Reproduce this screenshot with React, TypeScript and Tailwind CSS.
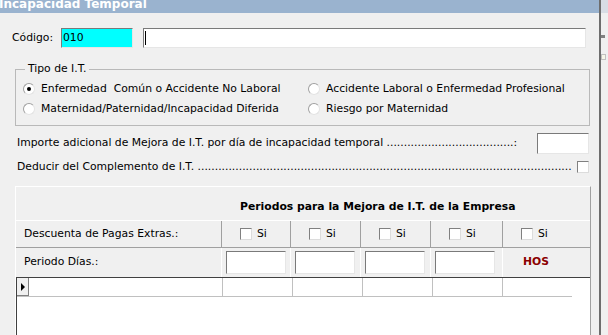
import React from "react";

const font = { fontFamily: '"DejaVu Sans", Verdana, sans-serif' };

function Radio({ checked }: { checked?: boolean }) {
  return (
    <span className="relative inline-block w-[12px] h-[12px] rounded-full bg-white border border-t-[#a0a0a0] border-l-[#a0a0a0] border-b-[#e3e3e3] border-r-[#e3e3e3] shrink-0">
      {checked && (
        <span className="absolute left-[3px] top-[3px] w-[4px] h-[4px] rounded-full bg-black" />
      )}
    </span>
  );
}

function Check() {
  return (
    <span className="inline-block w-[12px] h-[12px] bg-white border border-t-[#808080] border-l-[#808080] border-b-[#dcdcdc] border-r-[#dcdcdc] shrink-0" />
  );
}

function Sunken({ className }: { className: string }) {
  return (
    <div
      className={
        "bg-white border border-t-[#7a7a7a] border-l-[#7a7a7a] border-b-[#e6e6e6] border-r-[#e6e6e6] " +
        className
      }
    />
  );
}

export default function App() {
  return (
    <div
      className="w-[608px] h-[335px] overflow-hidden flex bg-[#f0f0f0] text-[10.8px] text-black"
      style={font}
    >
      <div className="w-[599px] h-full flex flex-col shrink-0">
        <div className="h-[13px] bg-[#9ab3cf] text-white font-bold text-[12px] leading-[13px] overflow-hidden">
          <div className="-mt-[2px] -ml-[1px]">Incapacidad Temporal</div>
        </div>
        {/* Codigo row */}
        <div className="flex items-center mt-[15px] h-[20px]">
          <span className="ml-[12px] w-[49px]">Código:</span>
          <div className="w-[72px] h-[20px] bg-[#00ffff] border border-t-[#7a7a7a] border-l-[#7a7a7a] border-b-[#e6e6e6] border-r-[#e6e6e6] leading-[17px] pl-[1px]">
            010
          </div>
          <div className="ml-[10px] w-[443px] h-[20px] bg-white border border-t-[#7a7a7a] border-l-[#7a7a7a] border-b-[#e6e6e6] border-r-[#e6e6e6] flex items-center pl-[1px]">
            <span className="w-[1px] h-[14px] bg-black" />
          </div>
        </div>
        {/* Group box */}
        <div className="relative ml-[15px] mt-[21px] w-[575px] h-[57px] border border-[#b9b9b9]">
          <span className="absolute left-[9px] -top-[8px] px-[3px] bg-[#f0f0f0] leading-[14px]">
            Tipo de I.T.
          </span>
          <div className="grid grid-cols-[285px_1fr] pl-[7px] pt-[12px] gap-y-[6px]">
            <div className="flex items-center gap-[6px] h-[14px]">
              <Radio checked />
              <span>Enfermedad&nbsp; Común o Accidente No Laboral</span>
            </div>
            <div className="flex items-center gap-[6px] h-[14px]">
              <Radio />
              <span>Accidente Laboral o Enfermedad Profesional</span>
            </div>
            <div className="flex items-center gap-[6px] h-[14px]">
              <Radio />
              <span>Maternidad/Paternidad/Incapacidad Diferida</span>
            </div>
            <div className="flex items-center gap-[6px] h-[14px]">
              <Radio />
              <span>Riesgo por Maternidad</span>
            </div>
          </div>
        </div>
        {/* Importe */}
        <div className="flex items-center mt-[7px] h-[21px]">
          <span className="ml-[17px] w-[518px] shrink-0 whitespace-nowrap">
            Importe adicional de Mejora de I.T. por día de incapacidad temporal .....................................:
          </span>
          <Sunken className="ml-[2px] w-[52px] h-[21px] shrink-0" />
        </div>
        <div className="flex items-center mt-[4px] h-[18px]">
          <span className="ml-[17px] w-[556px] shrink-0 whitespace-nowrap">
            Deducir del Complemento de I.T. .............................................................................................................
          </span>
          <span className="ml-[4px] flex">
            <Check />
          </span>
        </div>
        {/* Table */}
        <div className="ml-[15px] mt-[10px] w-[576px] flex-1 flex flex-col border-l border-t border-l-white border-t-white border-r border-r-[#a0a0a0]">
          <div className="h-[34px] flex items-center border-b border-white pt-[7px]">
            <span className="ml-[224px] font-bold">
              Periodos para la Mejora de I.T. de la Empresa
            </span>
          </div>
          <div className="grid grid-cols-[205px_69px_70px_70px_72px_69px] h-[27px] border-b border-[#a0a0a0]">
            <div className="flex items-center pl-[8px]">Descuenta de Pagas Extras.:</div>
            {[0, 1, 2, 3, 4].map((i) => (
              <div
                key={i}
                className="flex items-center pl-[18px] gap-[5px] border-l border-[#a0a0a0]"
              >
                <Check />
                <span>Si</span>
              </div>
            ))}
          </div>
          <div className="grid grid-cols-[205px_69px_70px_70px_72px_69px] h-[29px]">
            <div className="flex items-center pl-[8px]">Periodo Días.:</div>
            {[0, 1, 2, 3].map((i) => (
              <div key={i} className="flex items-center pl-[4px] border-l border-[#ffffff]">
                <Sunken className="w-[60px] h-[23px]" />
              </div>
            ))}
            <div className="flex items-center pl-[20px] font-bold text-[#8b0000] border-l border-white">
              HOS
            </div>
          </div>
          <div className="flex-1 bg-white border-t border-l border-t-[#404040] border-l-[#404040]">
            <div className="grid grid-cols-[205px_70px_70px_70px_70px_70px] h-[19px]">
              <div className="border-b border-[#c0c0c0] flex">
                <div className="w-[12px] h-[18px] bg-[#f0f0f0] border-r border-b border-[#808080] flex items-center justify-center">
                  <svg width="6" height="10" viewBox="0 0 6 10">
                    <path d="M1 1 L5 5 L1 9 Z" fill="black" />
                  </svg>
                </div>
              </div>
              {[0, 1, 2, 3, 4].map((i) => (
                <div key={i} className="border-l border-b border-[#c0c0c0]" />
              ))}
            </div>
          </div>
        </div>
      </div>
      <div className="w-[2px] h-full bg-[#6d6d6d]" />
      <div className="flex-1 h-full bg-[#f0f0f0] flex flex-col">
        <div className="h-[13px] bg-[#d8dde5]" />
        <div className="mt-[22px] h-[3px] bg-[#808080] w-[4px]" />
        <div className="mt-[16px] h-[6px] border border-[#c0c0c0] bg-[#f6f6e8] w-[5px]" />
      </div>
    </div>
  );
}
